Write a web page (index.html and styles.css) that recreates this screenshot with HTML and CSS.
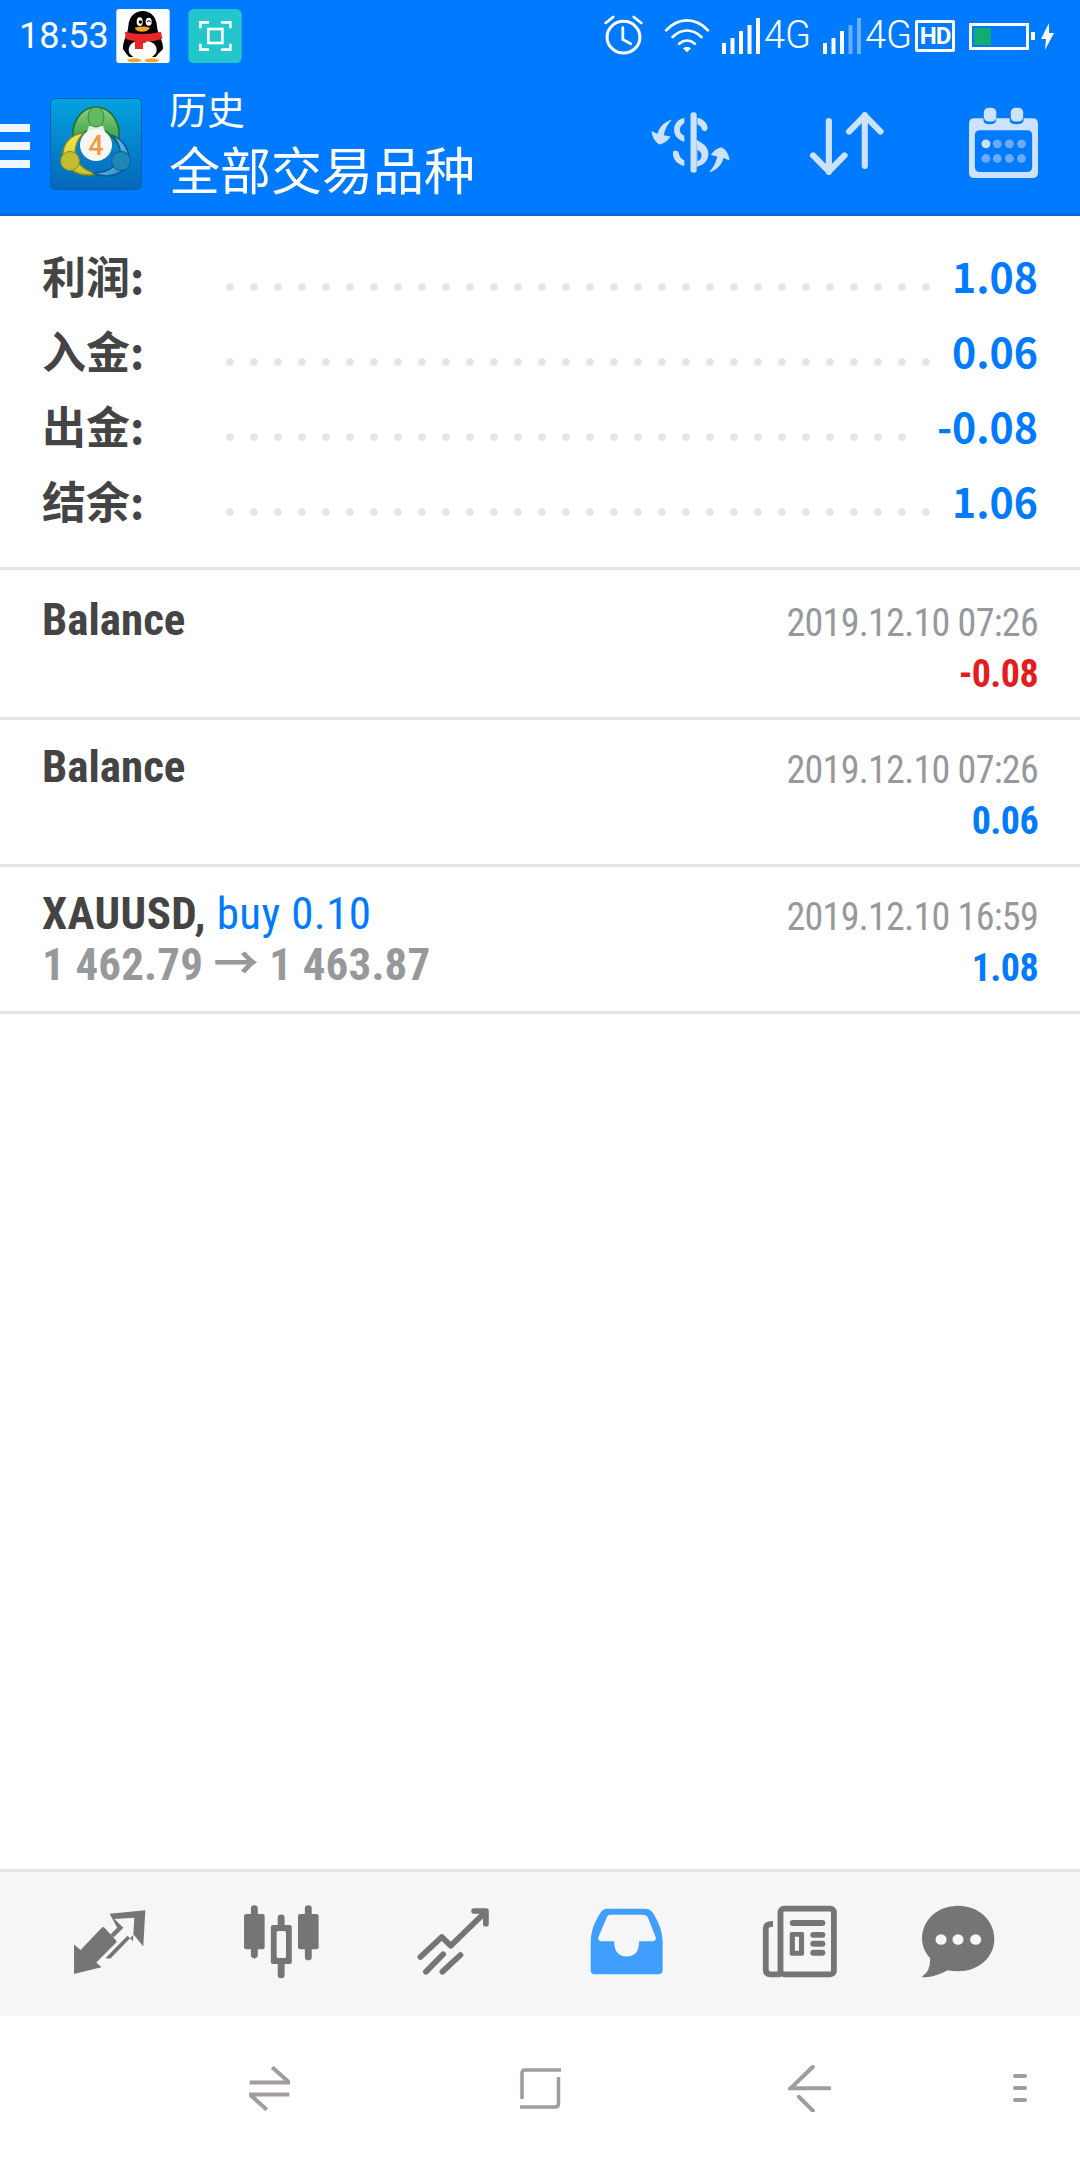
FILE: index.html
```html
<!DOCTYPE html>
<html lang="en">
<head>
    <meta charset="UTF-8">
    <title>History</title>
    <link rel="stylesheet" href="styles.css">
</head>
<body>
    <div id="app">
        <div id="top">
            <div class="status-bar">
                <span class="clock">18:53</span>
                <svg class="note-icon" viewBox="0 0 160 162">
                    <rect width="160" height="162" rx="8" fill="#fff"/>
                    <path d="M20 120C18 98 34 78 36 52 38 20 58 6 79 6s41 14 43 46c2 26 20 46 18 68l-14 14-8 10H38l-8-10z" fill="#000"/>
                    <ellipse cx="79" cy="122" rx="42" ry="29" fill="#fff"/>
                    <ellipse cx="70" cy="38" rx="9" ry="13" fill="#fff"/>
                    <ellipse cx="97" cy="38" rx="9" ry="12" fill="#fff"/>
                    <circle cx="72" cy="39" r="5" fill="#000"/>
                    <path d="M92 38q6-6 11 0" stroke="#000" stroke-width="3" fill="none"/>
                    <path d="M55 56q24-7 46 0-7 12-24 12T55 56z" fill="#f5a623"/>
                    <path d="M26 68q52 14 108 0l4 22q-26 8-50 8v4H80v18H56V96q-16-2-28-6z" fill="#e8262a"/>
                    <ellipse cx="54" cy="154" rx="22" ry="6" fill="#f5a623"/>
                    <ellipse cx="106" cy="154" rx="22" ry="6" fill="#f5a623"/>
                </svg>
                <svg class="note-icon shot-icon" viewBox="0 0 160 162">
                    <rect width="160" height="162" rx="16" fill="#23c7cb"/>
                    <path d="M36 58V40h26M98 40h28v18M36 104v18h26M98 122h28v-18" fill="none" stroke="#fff" stroke-width="8"/>
                    <rect x="60" y="60" width="42" height="42" fill="none" stroke="#fff" stroke-width="8"/>
                </svg>
                <div class="status-right">
                    <svg class="alarm-icon" viewBox="188 46 114 124" preserveAspectRatio="none">
                        <circle cx="245" cy="113" r="48" fill="none" stroke="#fff" stroke-width="9"/>
                        <path d="M243 84v36l23 13M193 70l22-18M275 52l22 18" fill="none" stroke="#fff" stroke-width="8" stroke-linecap="round"/>
                    </svg>
                    <svg class="wifi-icon" viewBox="360 52 134 108" preserveAspectRatio="none">
                        <path d="M366 92c36-40 86-40 122 0M385 112c26-26 58-26 84 0M404 132c14-12 32-12 46 0" fill="none" stroke="#fff" stroke-width="8" stroke-linecap="round"/>
                        <path d="M415 146q12-8 24 0l-12 12z" fill="#fff"/>
                    </svg>
                    <svg class="signal-icon" viewBox="0 0 38 36" preserveAspectRatio="none">
                        <path d="M0 25h4v11H0zM8.500 20h4v16h-4zM17 13h4v23h-4zM25.500 7h4v29h-4zM34 0h4v36h-4z" fill="#fff"/>
                    </svg>
                    <span class="net">4G</span>
                    <svg class="signal-icon second" viewBox="0 0 38 36" preserveAspectRatio="none">
                        <path d="M0 25h4v11H0zM8.500 20h4v16h-4zM17 13h4v23h-4z" fill="#fff"/>
                        <path d="M25.500 7h4v29h-4zM34 0h4v36h-4z" fill="#6eaeff"/>
                    </svg>
                    <span class="net">4G</span>
                    <span class="hd">HD</span>
                    <div class="battery"><div class="battery-level" style="width:17px"></div></div>
                    <div class="battery-nub"></div>
                    <svg class="bolt-icon" viewBox="0 0 13 27">
                        <path d="M8 0L0 16h5l-1 11 9-17H8z" fill="#fff"/>
                    </svg>
                </div>
            </div>
            <div class="toolbar">
                <div class="burger"><span></span><span></span><span></span></div>
                <svg class="logo" viewBox="0 0 92 92">
                    <defs>
                        <linearGradient id="logoBg" x1="0" y1="0" x2="0" y2="1">
                            <stop offset="0" stop-color="#04a2e2"/>
                            <stop offset="1" stop-color="#0468b8"/>
                        </linearGradient>
                        <linearGradient id="logoGreen" x1="0" y1="0" x2="0" y2="1">
                            <stop offset="0" stop-color="#8ccf7e"/>
                            <stop offset="1" stop-color="#2f9a40"/>
                        </linearGradient>
                        <linearGradient id="logoYellow" x1="0" y1="0" x2="0" y2="1">
                            <stop offset="0" stop-color="#f2e75c"/>
                            <stop offset="1" stop-color="#c9c02e"/>
                        </linearGradient>
                        <linearGradient id="logoBlue" x1="0" y1="0" x2="1" y2="1">
                            <stop offset="0" stop-color="#9adaf2"/>
                            <stop offset="1" stop-color="#1d86c6"/>
                        </linearGradient>
                    </defs>
                    <rect x="0.500" y="0.500" width="91" height="91" rx="5" fill="url(#logoBg)" stroke="#0a5fae"/>
                    <path d="M24 46C19 26 31 9 46 9s27 17 22 37L57 34c-3-3-19-3-22 0z" fill="url(#logoGreen)" stroke="#1a7029" stroke-width="1.500"/>
                    <path d="M36 36q10-5 20 0l-3-8H39z" fill="#dff0d8"/>
                    <ellipse cx="46" cy="19" rx="8" ry="10" fill="#63b963" stroke="#2f8a3c"/>
                    <path d="M34 35C19 36 12 48 13 58c1 13 16 22 34 18-8-2-16-6-20-14-4-8-1-20 7-27z" fill="url(#logoYellow)" stroke="#87861a" stroke-width="1.500"/>
                    <circle cx="20" cy="63" r="9.500" fill="#c3bb30" stroke="#87861a"/>
                    <path d="M61 37c12 4 18 14 18 24 0 12-18 22-36 14 10 0 22-4 26-14 3-8 0-18-8-24z" fill="url(#logoBlue)" stroke="#0d5a94" stroke-width="1.500"/>
                    <circle cx="71" cy="63" r="9.500" fill="#1f86b8" stroke="#0d5a94"/>
                    <circle cx="46" cy="47" r="16" fill="#f6f6f2"/>
                    <text class="logo-four" x="46" y="57" text-anchor="middle">4</text>
                </svg>
                <div class="titles">
                    <div class="title-small">历史</div>
                    <div class="title-big">全部交易品种</div>
                </div>
                <div class="tool-icons">
                    <svg class="tool-dollar" viewBox="318 332 236 188" preserveAspectRatio="none">
                        <g fill="#cce2ff">
                            <rect x="436" y="336" width="18" height="180" rx="8"/>
                            <path d="M456 352c16 3 28 14 30 30 0 12-14 14-17 4-2-8-7-13-13-14z"/>
                            <path d="M418 352c-18 4-30 18-30 36s12 30 30 36v-18c-8-3-13-10-13-18s5-15 13-20z"/>
                            <path d="M454 418l18 12c12 8 16 20 16 30 0 20-14 34-34 38zM456 448v34c8-2 12-10 12-17s-4-13-12-17z" fill-rule="evenodd"/>
                            <path d="M385 455c-2 20 12 36 33 41v-17c-8-3-14-10-16-22-2-8-15-8-17-2z"/>
                            <path d="M382 357C360 364 345 378 340 400L322 392Q325 420 345 432Q365 428 378 408L358 404C362 385 370 370 382 357z"/>
                            <path d="M490 515C512 508 527 494 532 472L550 480Q547 452 527 440Q507 444 495 463L514 468C510 487 502 502 490 515z"/>
                        </g>
                    </svg>
                    <svg class="tool-arrows" viewBox="778 332 222 196" preserveAspectRatio="none">
                        <path d="M836 362v154M790 466l46 48 46-48M941 498V344M895 394l46-48 46 48" fill="none" stroke="#cce2ff" stroke-width="18" stroke-linecap="round" stroke-linejoin="round"/>
                    </svg>
                    <svg class="tool-calendar" viewBox="1243 320 200 214" preserveAspectRatio="none">
                        <path d="M1259 354h26v6q0 12 18 12t18-12v-6h40v6q0 12 20 12t20-12v-6h26q16 0 16 16v148q0 16-16 16h-168q-16 0-16-16V370q0-16 16-16z" fill="#cce2ff"/>
                        <rect x="1286" y="322" width="36" height="42" rx="14" fill="#cce2ff"/>
                        <rect x="1364" y="322" width="36" height="42" rx="14" fill="#cce2ff"/>
                        <rect x="1260" y="390" width="166" height="126" rx="14" fill="#007aff"/>
                        <circle cx="1292" cy="431" r="13" fill="#cce2ff"/>
                        <g fill="#6eaaf8">
                            <circle cx="1325" cy="431" r="13"/><circle cx="1360" cy="431" r="13"/><circle cx="1395" cy="431" r="13"/>
                            <circle cx="1292" cy="475" r="13"/><circle cx="1325" cy="475" r="13"/><circle cx="1360" cy="475" r="13"/><circle cx="1395" cy="475" r="13"/>
                        </g>
                    </svg>
                </div>
            </div>
        </div>

        <div id="summary">
            <div class="sum-row"><span class="sum-label">利润:</span><span class="dots"></span><span class="sum-value">1.08</span></div>
            <div class="sum-row"><span class="sum-label">入金:</span><span class="dots"></span><span class="sum-value">0.06</span></div>
            <div class="sum-row"><span class="sum-label">出金:</span><span class="dots"></span><span class="sum-value">-0.08</span></div>
            <div class="sum-row"><span class="sum-label">结余:</span><span class="dots"></span><span class="sum-value">1.06</span></div>
        </div>

        <div id="deals">
            <div class="deal">
                <div class="deal-left"><div class="line-top narrow"><b>Balance</b></div></div>
                <div class="deal-right">
                    <div class="deal-time narrow">2019.12.10 07:26</div>
                    <div class="deal-sum red narrow">-0.08</div>
                </div>
            </div>
            <div class="deal">
                <div class="deal-left"><div class="line-top narrow"><b>Balance</b></div></div>
                <div class="deal-right">
                    <div class="deal-time narrow">2019.12.10 07:26</div>
                    <div class="deal-sum narrow">0.06</div>
                </div>
            </div>
            <div class="deal">
                <div class="deal-left">
                    <div class="line-top narrow trade"><b>XAUUSD,</b> <span class="buy">buy 0.10</span></div>
                    <div class="line-prices narrow">1 462.79 → 1 463.87</div>
                </div>
                <div class="deal-right">
                    <div class="deal-time narrow">2019.12.10 16:59</div>
                    <div class="deal-sum narrow">1.08</div>
                </div>
            </div>
        </div>

        <div id="tabs">
            <svg width="73" height="65" viewBox="213 150 213 194" preserveAspectRatio="none">
                <path d="M216 342V256l19 16 62-66q4-4 8 0l34 38q2 4 0 6l-58 60 15 14-72 18q-8 2-8-0z" fill="#757575"/>
                <path d="M320 164l104-10-6 108-28-36-66 70q-6 4-16 0l64-66 16 16 4-70-58 4 26 26-28 28-10-8 20-20z" fill="#757575"/>
            </svg>
            <svg width="77" height="75" viewBox="706 132 224 226" preserveAspectRatio="none">
                <g fill="#757575">
                    <rect x="709" y="162" width="60" height="106" rx="6"/><rect x="729" y="136" width="20" height="160" rx="10"/>
                    <rect x="866" y="162" width="60" height="106" rx="6"/><rect x="886" y="136" width="20" height="166" rx="10"/>
                    <rect x="787" y="195" width="61" height="118" rx="6"/><rect x="807" y="164" width="20" height="192" rx="10"/>
                </g>
                <rect x="804" y="213" width="27" height="82" rx="5" fill="#f6f6f6"/>
            </svg>
            <svg width="73" height="68" viewBox="1212 140 212 204" preserveAspectRatio="none">
                <path d="M1222 290l62-60 26 26 100-100M1378 152h34v38M1238 334l50-52M1286 334l52-50" fill="none" stroke="#757575" stroke-width="17" stroke-linecap="round" stroke-linejoin="round"/>
            </svg>
            <svg width="74" height="67" viewBox="146 142 214 202" preserveAspectRatio="none">
                <path d="M196 144h108q18 0 26 16 26 44 26 84v86q0 12-12 12H160q-12 0-12-12v-86q0-42 26-84 8-16 22-16z" fill="#409eff"/>
                <path d="M206 162h90q14 0 18 10l22 58q2 12-10 12h-38q0 46-36 46t-36-46h-36q-12 0-10-12l24-58q2-10 12-10z" fill="#f6f6f6"/>
            </svg>
            <svg width="76" height="73" viewBox="646 132 222 220" preserveAspectRatio="none">
                <g fill="none" stroke="#757575" stroke-width="17" stroke-linejoin="round">
                    <rect x="700" y="143" width="156" height="198" rx="10"/>
                    <path d="M678 189q-21 0-21 14v124q0 14 14 14h30"/>
                </g>
                <g fill="#757575">
                    <rect x="727" y="177" width="104" height="18" rx="9"/>
                    <path d="M733 213h30q6 0 6 6v60q0 6-6 6h-30q-6 0-6-6v-60q0-6 6-6zM742 228v42h12v-42z" fill-rule="evenodd"/>
                    <rect x="787" y="213" width="44" height="18" rx="9"/><rect x="787" y="240" width="44" height="18" rx="9"/><rect x="787" y="267" width="44" height="18" rx="9"/>
                </g>
            </svg>
            <svg width="74" height="73" viewBox="1106 132 214 220" preserveAspectRatio="none">
                <path d="M1213 134c58 0 105 42 105 100s-47 98-105 98q-16 0-30-3-34 20-66 21-12 0-6-4 24-18 21-54c-14-16-23-36-23-58 0-58 46-100 104-100z" fill="#757575"/>
                <circle cx="1164" cy="236" r="16" fill="#f6f6f6"/><circle cx="1213" cy="236" r="16" fill="#f6f6f6"/><circle cx="1264" cy="236" r="16" fill="#f6f6f6"/>
            </svg>
        </div>

        <div id="nav">
            <svg class="nav-switch" viewBox="724 616 120 136" preserveAspectRatio="none">
                <path d="M726 666h116L792 620M842 702H726l50 46" fill="none" stroke="#a39c9c" stroke-width="12"/>
            </svg>
            <svg class="nav-home" viewBox="0 0 41 41">
                <path d="M2 31V5q0-3 3-3h36M0 39h35q3.500 0 3.500-3.500V9" fill="none" stroke="#a39c9c" stroke-width="3.500"/>
            </svg>
            <svg class="nav-back" viewBox="720 614 128 142" preserveAspectRatio="none">
                <path d="M792 620l-64 64h112M752 710l40 42" fill="none" stroke="#a39c9c" stroke-width="12" stroke-linecap="round"/>
            </svg>
            <div class="nav-menu"><span></span><span></span><span></span></div>
        </div>
    </div>
</body>
</html>
```
FILE: styles.css
```css
* {
    box-sizing: border-box;
}

body {
    margin: 0;
    background: #fff;
    font-family: Roboto, "Noto Sans CJK SC", sans-serif;
}

#app {
    width: 1080px;
    height: 2160px;
    display: flex;
    flex-direction: column;
}

svg {
    display: block;
    flex: none;
}

#top {
    height: 216px;
    background: #007aff;
    border-bottom: 3px solid #006cdf;
    color: #fff;
}

.status-bar {
    height: 72px;
    display: flex;
    align-items: flex-start;
    padding: 9px 0 0 19px;
}

.clock {
    font-size: 36px;
    line-height: 54px;
    width: 97px;
}

.note-icon {
    width: 54px;
    height: 54px;
}

.shot-icon {
    margin-left: 18px;
}

.status-right {
    margin-left: auto;
    width: 477px;
    height: 54px;
    display: flex;
    align-items: flex-start;
}

.alarm-icon {
    width: 39px;
    height: 41px;
    margin: 6px 0 0 1px;
}

.wifi-icon {
    width: 46px;
    height: 36px;
    margin: 8px 0 0 21px;
}

.signal-icon {
    width: 38px;
    height: 36px;
    margin: 9px 0 0 12px;
}

.signal-icon.second {
    margin-left: 17px;
}

.net {
    font-size: 38px;
    font-weight: 300;
    line-height: 40px;
    margin: 6px 0 0 4px;
    width: 42px;
}

.hd {
    width: 40px;
    height: 32px;
    margin: 11px 0 0 8px;
    border: 3px solid #fff;
    border-radius: 2px;
    font-size: 24px;
    font-weight: 700;
    line-height: 26px;
    text-align: center;
    letter-spacing: -1px;
}

.battery {
    width: 60px;
    height: 27px;
    margin: 14px 0 0 14px;
    border: 3px solid #fff;
    padding: 2px;
}

.battery-level {
    height: 100%;
    background: #10ac74;
}

.battery-nub {
    width: 4px;
    height: 8px;
    margin: 23px 0 0 2px;
    background: #fff;
}

.bolt-icon {
    width: 13px;
    height: 27px;
    margin: 14px 0 0 6px;
}

.toolbar {
    height: 141px;
    display: flex;
    align-items: flex-start;
}

.burger {
    width: 30px;
    margin: 52px 20px 0 0;
    display: flex;
    flex-direction: column;
    gap: 10px;
}

.burger span {
    height: 8px;
    background: #eef6ff;
}

.logo {
    width: 92px;
    height: 92px;
    margin-top: 26px;
}

.logo-four {
    font-family: Roboto, sans-serif;
    font-size: 27px;
    font-weight: 500;
    fill: #f19a3e;
}

.titles {
    margin-left: 27px;
}

.title-small {
    font-size: 38px;
    line-height: 40px;
    margin-top: 19px;
}

.title-big {
    font-size: 51px;
    line-height: 60px;
    margin-top: 12px;
}

.tool-icons {
    margin-left: auto;
    display: flex;
    align-items: flex-start;
    width: 430px;
}

.tool-dollar {
    width: 81px;
    height: 63px;
    margin-top: 39px;
}

.tool-arrows {
    width: 76px;
    height: 65px;
    margin: 39px 0 0 78px;
}

.tool-calendar {
    width: 69px;
    height: 71px;
    margin: 35px 0 0 84px;
}

#summary {
    height: 354px;
    padding: 22px 42px 0;
    border-bottom: 3px solid #e5e5e5;
    font-family: "Noto Sans CJK SC", sans-serif;
}

.sum-row {
    height: 75px;
    display: flex;
    align-items: center;
}

.sum-label {
    width: 184px;
    font-size: 44px;
    font-weight: 700;
    line-height: 75px;
    color: #444;
}

.dots {
    flex: 1;
    height: 8px;
    margin: 23px 20px 0 0;
    background-image: radial-gradient(circle at 4px 4px, #e5e5e5 3.500px, transparent 4px);
    background-size: 24px 8px;
}

.sum-value {
    font-size: 41px;
    font-weight: 700;
    color: #007aff;
    line-height: 75px;
}

#deals {
    padding-top: 3px;
}

.deal {
    height: 147px;
    display: flex;
    justify-content: space-between;
    padding: 0 42px;
    border-bottom: 3px solid #e5e5e5;
}

.narrow {
    font-stretch: 75%;
    line-height: 51px;
    white-space: nowrap;
}

.deal-left {
    padding-top: 21px;
}

.line-top {
    font-size: 45px;
    color: #444;
}

.trade {
    letter-spacing: 0.4px;
}

.buy {
    color: #007aff;
}

.line-prices {
    font-size: 45px;
    letter-spacing: 0.15px;
    font-weight: 700;
    color: #97989c;
}

.deal-right {
    padding-top: 25px;
    text-align: right;
}

.deal-time {
    font-size: 38px;
    letter-spacing: -0.7px;
    color: #97989c;
}

.deal-sum {
    font-size: 38px;
    letter-spacing: -0.6px;
    font-weight: 700;
    color: #007aff;
}

.deal-sum.red {
    color: #e51c1c;
}

#tabs {
    margin-top: auto;
    height: 147px;
    background: #f6f6f6;
    border-top: 3px solid #e5e5e5;
    padding: 0 0 6px 73px;
    display: grid;
    grid-template-columns: 170px 174px 173px 172px 159px 74px;
    align-items: center;
}

#nav {
    height: 144px;
    display: flex;
    align-items: center;
    padding-left: 249px;
}

.nav-switch {
    width: 41px;
    height: 45px;
}

.nav-home {
    width: 41px;
    height: 41px;
    margin-left: 230px;
}

.nav-back {
    width: 44px;
    height: 47px;
    margin-left: 227px;
}

.nav-menu {
    width: 14px;
    margin-left: 181px;
    display: flex;
    flex-direction: column;
    gap: 8px;
}

.nav-menu span {
    height: 4px;
    border-radius: 2px;
    background: #a39c9c;
}
```
